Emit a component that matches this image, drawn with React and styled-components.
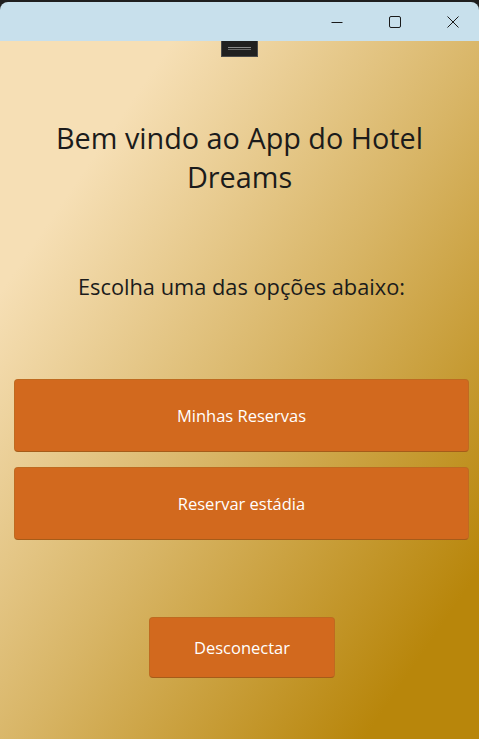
import React from "react";
import styled, { createGlobalStyle } from "styled-components";

const Global = createGlobalStyle`
  html, body { margin: 0; padding: 0; height: 100%; }
  body {
    background: #1f1f1f;
    font-family: "Open Sans", "Noto Sans", sans-serif;
    overflow: hidden;
  }
  #root { height: 100%; }
`;

const Desk = styled.div`
  height: 739px;
  display: flex;
  flex-direction: column;
  padding-top: 2px;
  box-sizing: border-box;
`;

const Window = styled.div`
  flex: 1;
  display: flex;
  flex-direction: column;
  border-radius: 8px 8px 0 0;
  overflow: hidden;
  position: relative;
`;

const TitleBar = styled.div`
  height: 39px;
  background: #c8e0ec;
  display: flex;
  justify-content: flex-end;
  align-items: stretch;
`;

const CtrlButton = styled.div`
  width: 57px;
  display: flex;
  align-items: center;
  justify-content: center;
  color: #1a1a1a;
  padding-left: ${(p) => p.$shift || 0}px;
  box-sizing: border-box;
`;

const Content = styled.main`
  flex: 1;
  display: flex;
  flex-direction: column;
  align-items: stretch;
  background: linear-gradient(to bottom right, #f6dfb5 18%, #d8b566 52%, #b8860b 88%);
  padding: 0 10px 0 14px;
  box-sizing: border-box;
  position: relative;
`;

const Handle = styled.div`
  position: absolute;
  top: 0;
  left: 221px;
  width: 37px;
  height: 16px;
  background: #202020;
  border: 1px solid #4a4a4a;
  border-top: none;
  box-sizing: border-box;
  display: flex;
  flex-direction: column;
  align-items: center;
  justify-content: center;
  gap: 1px;
`;

const HandleLine = styled.span`
  display: block;
  width: 23px;
  height: 1px;
  background: ${(p) => p.$c};
`;

const Heading = styled.h1`
  margin: 77px 30px 0 26px;
  font-weight: 400;
  font-size: 28.8px;
  line-height: 39px;
  color: #1b1b1b;
  text-align: center;
`;

const Sub = styled.p`
  margin: 77px 0 0;
  font-size: 21.8px;
  line-height: 28px;
  color: #1b1b1b;
  text-align: center;
`;

const Options = styled.div`
  display: flex;
  flex-direction: column;
  gap: 15px;
  margin-top: 78px;
`;

const ActionButton = styled.button`
  font-family: inherit;
  background: #d2691e;
  color: #ffffff;
  border: 1px solid rgba(160, 110, 40, 0.35);
  border-bottom-color: rgba(120, 80, 20, 0.5);
  border-radius: 4px;
  font-size: 16.5px;
  height: ${(p) => p.$h || 73}px;
  width: ${(p) => (p.$w ? `${p.$w}px` : "100%")};
  padding: 0 16px;
  cursor: pointer;
  align-self: ${(p) => (p.$w ? "center" : "stretch")};
`;

const Footer = styled.div`
  display: flex;
  justify-content: center;
  margin-top: 77px;
  padding-left: 1px;
`;

export default function App() {
  return (
    <>
      <Global />
      <Desk>
        <Window>
          <TitleBar>
            <CtrlButton>
              <svg width="12" height="12" viewBox="0 0 12 12">
                <path d="M0.5 6.5h11" stroke="currentColor" strokeWidth="1" />
              </svg>
            </CtrlButton>
            <CtrlButton $shift={3}>
              <svg width="12" height="12" viewBox="0 0 12 12">
                <rect x="0.5" y="0.5" width="11" height="11" rx="1.5" fill="none" stroke="currentColor" strokeWidth="1" />
              </svg>
            </CtrlButton>
            <CtrlButton $shift={4}>
              <svg width="12" height="12" viewBox="0 0 12 12">
                <path d="M0.5 0.5l11 11M11.5 0.5l-11 11" stroke="currentColor" strokeWidth="1" />
              </svg>
            </CtrlButton>
          </TitleBar>
          <Content>
            <Handle>
              <HandleLine $c="#8a8a8a" />
              <HandleLine $c="#6a6a6a" />
            </Handle>
            <Heading>Bem vindo ao App do Hotel Dreams</Heading>
            <Sub>Escolha uma das opções abaixo:</Sub>
            <Options>
              <ActionButton>Minhas Reservas</ActionButton>
              <ActionButton>Reservar estádia</ActionButton>
            </Options>
            <Footer>
              <ActionButton $w={186} $h={61}>Desconectar</ActionButton>
            </Footer>
          </Content>
        </Window>
      </Desk>
    </>
  );
}
